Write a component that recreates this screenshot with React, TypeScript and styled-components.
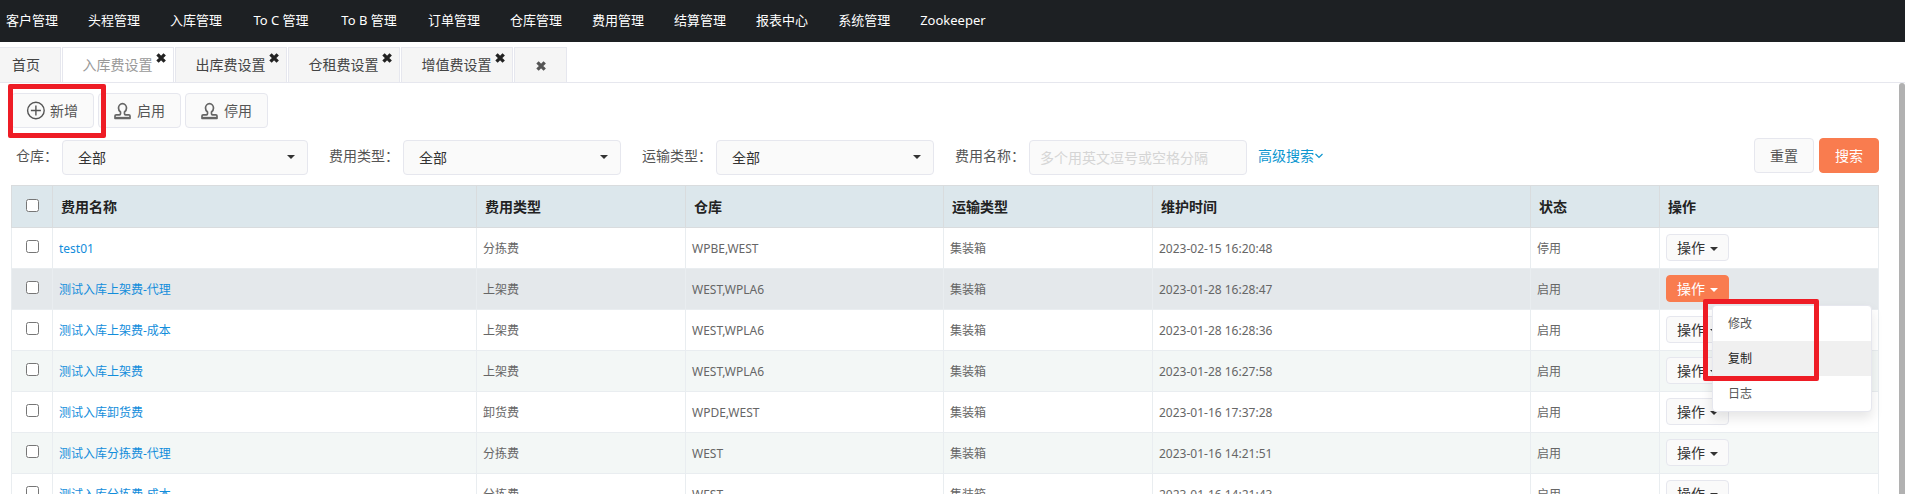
import React from 'react';
import styled, { createGlobalStyle, css } from 'styled-components';

const Global = createGlobalStyle`
  *, *::before, *::after { box-sizing: border-box; }
  html, body { margin: 0; height: 100%; overflow: hidden; }
  body {
    font-family: "Noto Sans", "Noto Sans CJK SC", sans-serif;
    font-size: 14px;
    line-height: 20px;
    color: #555;
    background: #fff;
  }
  #root { height: 100%; }
  button, input, select { font: inherit; color: inherit; margin: 0; }
  a { text-decoration: none; }
`;

const Page = styled.div`
  display: flex;
  flex-direction: column;
  height: 100%;
  overflow: hidden;
`;

const TopNav = styled.nav`
  flex: none;
  display: flex;
  gap: 30px;
  height: 42px;
  padding: 10px 6px;
  background: #1d2023;
`;

const NavLink = styled.a<{ $latin?: boolean }>`
  min-width: ${(p) => (p.$latin ? 58 : 52)}px;
  color: #fff;
  font-size: 13px;
  text-align: center;
  white-space: nowrap;
`;

const TabBar = styled.div`
  flex: none;
  display: flex;
  gap: 1px;
  margin-top: 5px;
  border-bottom: 1px solid #e6e7ee;
`;

const Tab = styled.div<{ $active?: boolean; $width: number }>`
  display: flex;
  align-items: center;
  justify-content: center;
  gap: 3px;
  width: ${(p) => p.$width}px;
  height: 35px;
  border: 1px solid #e6e7ee;
  border-bottom: 0;
  background: ${(p) => (p.$active ? '#fff' : '#f5f5f5')};
  &:first-child { border-left: 0; justify-content: flex-start; padding-left: 12px; }
`;

const TabLink = styled.a<{ $active?: boolean }>`
  color: ${(p) => (p.$active ? '#999' : '#444')};
  white-space: nowrap;
`;

const TabClose = styled.button<{ $raised?: boolean }>`
  display: flex;
  padding: 2px 0 0;
  border: 0;
  background: none;
  color: ${(p) => (p.$raised ? '#222' : '#555')};
  ${(p) => p.$raised && css`
    align-self: flex-start;
    margin: 3px -12px 0 0;
  `}
`;

const Content = styled.main`
  flex: 1;
  min-height: 0;
  overflow: hidden;
  display: flex;
`;

const Panel = styled.div`
  flex: 1;
  min-width: 0;
  padding: 10px 20px 0 11px;
`;

const ScrollTrack = styled.div`
  flex: none;
  width: 6px;
`;

const ScrollThumb = styled.div`
  height: 100%;
  background: #b1b1b1;
  border-radius: 3px 3px 0 0;
`;

const Toolbar = styled.div`
  display: flex;
  gap: 4px;
`;

const Highlighted = styled.div`
  position: relative;
`;

const Marker = styled.span<{ $top: number; $left: number; $width: number; $height: number }>`
  position: absolute;
  z-index: 5;
  top: ${(p) => p.$top}px;
  left: ${(p) => p.$left}px;
  width: ${(p) => p.$width}px;
  height: ${(p) => p.$height}px;
  border: 5px solid #ee1c25;
  border-radius: 2px;
  pointer-events: none;
`;

const boxed = css`
  height: 35px;
  border: 1px solid #e6e7ee;
  border-radius: 4px;
  background: #fafafa;
`;

const ToolButton = styled.button`
  ${boxed}
  display: flex;
  align-items: center;
  gap: 5px;
  width: 83px;
  padding: 0 0 0 14px;
  white-space: nowrap;
  svg { flex: none; }
`;

const Filters = styled.form`
  display: flex;
  align-items: flex-start;
  padding: 10px 0 10px 5px;
`;

const Field = styled.div<{ $labelWidth: number; $width: number }>`
  display: grid;
  grid-template-columns: ${(p) => p.$labelWidth}px ${(p) => p.$width}px;
  align-items: center;
  margin: 2px 21px 0 0;
`;

const FieldLabel = styled.label`
  padding-bottom: 3px;
  white-space: nowrap;
`;

const SelectWrap = styled.div`
  position: relative;
`;

const Select = styled.select`
  ${boxed}
  display: block;
  width: 100%;
  padding: 0 24px 0 15px;
  appearance: none;
  color: #333;
`;

const SelectArrow = styled.span`
  position: absolute;
  top: 15px;
  right: 13px;
  border: solid transparent;
  border-width: 4px 4px 0;
  border-top-color: #333;
  pointer-events: none;
`;

const TextInput = styled.input`
  ${boxed}
  width: 100%;
  padding: 0 10px;
  &::placeholder { color: #d5d5d5; opacity: 1; }
`;

const AdvancedLink = styled.a`
  display: flex;
  align-items: center;
  gap: 1px;
  margin: 8px 0 0 -10px;
  color: #0d96cf;
`;

const FormActions = styled.div`
  display: flex;
  gap: 5px;
  margin-left: auto;
`;

const FormButton = styled.button<{ $primary?: boolean }>`
  ${boxed}
  width: 60px;
  padding: 0;
  ${(p) => p.$primary && css`
    border-color: #f97c4f;
    background: #f97c4f;
    color: #fff;
  `}
`;

const FeeTable = styled.table`
  width: 100%;
  table-layout: fixed;
  border-collapse: collapse;
  border: 1px solid #d9dcde;
  font-size: 12px;
`;

const HeadCell = styled.th`
  height: 42px;
  padding: 0 8px;
  border: 1px solid #d9dcde;
  background: #dce7ec;
  color: #222;
  font-size: 14px;
  font-weight: bold;
  text-align: left;
`;

const Row = styled.tr<{ $tone: 'plain' | 'striped' | 'hover' }>`
  background: ${(p) => ({ plain: '#fff', striped: '#f3f7f6', hover: '#e4e8eb' })[p.$tone]};
`;

const Cell = styled.td`
  height: 41px;
  padding: 2px 6px 0;
  border: 1px solid #e9edf0;
  color: #666;
  white-space: nowrap;
`;

const ActionCell = styled(Cell)`
  padding: 0 6px 1px;
`;

const Check = styled.input`
  display: block;
  width: 13px;
  height: 13px;
`;

const CheckBox = styled.div`
  display: flex;
  justify-content: center;
  padding-bottom: 5px;
`;

const HeadCheckBox = styled(CheckBox)`
  padding-bottom: 3px;
`;

const FeeLink = styled.a`
  color: #128ddb;
`;

const MenuAnchor = styled.div`
  position: relative;
  width: 63px;
`;

const ActionButton = styled.button<{ $open?: boolean }>`
  display: flex;
  align-items: center;
  justify-content: center;
  gap: 5px;
  width: 63px;
  height: 27px;
  padding: 0;
  border: 1px solid ${(p) => (p.$open ? '#f97c4f' : '#e6e7ee')};
  border-radius: 4px;
  background: ${(p) => (p.$open ? '#f97c4f' : '#fafafa')};
  color: ${(p) => (p.$open ? '#fff' : '#333')};
  font-size: 14px;
  &::after {
    content: "";
    border: solid transparent;
    border-width: 4px 4px 0;
    border-top-color: currentColor;
    margin-top: 2px;
  }
`;

const Menu = styled.div`
  position: absolute;
  z-index: 4;
  top: 30px;
  left: 46px;
  width: 160px;
  border: 1px solid #e6e7ee;
  border-radius: 4px;
  background: #fff;
  box-shadow: 0 6px 12px rgba(0, 0, 0, 0.1);
`;

const MenuItem = styled.button<{ $hover?: boolean }>`
  display: block;
  width: 100%;
  height: 35px;
  padding: 0 15px;
  border: 0;
  background: ${(p) => (p.$hover ? '#f0f0f0' : 'transparent')};
  color: ${(p) => (p.$hover ? '#222' : '#555')};
  font-size: 12px;
  text-align: left;
`;

const CrossIcon = () => (
  <svg width="10" height="10" viewBox="0 0 10 10" aria-hidden="true">
    <path d="M1.500 1.300 8.700 8.700M8.700 1.300 1.500 8.700" stroke="currentColor" strokeWidth="3.300" fill="none" />
  </svg>
);

const PlusIcon = () => (
  <svg width="19" height="19" viewBox="0 0 19 19" fill="none" stroke="#555" strokeWidth="1.4" aria-hidden="true">
    <circle cx="9.900" cy="9.500" r="8.300" />
    <path d="M9.900 4.500v10M4.900 9.500h10" />
  </svg>
);

const StampIcon = () => (
  <svg width="19" height="18" viewBox="0 0 19 18" fill="none" stroke="#666" strokeWidth="1.700" strokeLinejoin="round" aria-hidden="true">
    <path d="M2 16.300v-2.300c0-.7.5-1.200 1.200-1.200h3.300c.7 0 1-.4 1-1V10c-1.300-.9-2-2.300-2-3.900a4 4.400 0 0 1 8 0c0 1.600-.7 3-2 3.900v1.800c0 .6.3 1 1 1h3.300c.7 0 1.200.5 1.200 1.200v2.300z" />
    <path d="M2 15.700h15" />
  </svg>
);

const ChevronIcon = () => (
  <svg width="8" height="6" viewBox="0 0 8 6" fill="none" stroke="currentColor" strokeWidth="1.2" aria-hidden="true">
    <path d="M0.500 1 4 4.500 7.500 1" />
  </svg>
);

const navItems = [
  '客户管理', '头程管理', '入库管理', 'To C 管理', 'To B 管理', '订单管理',
  '仓库管理', '费用管理', '结算管理', '报表中心', '系统管理', 'Zookeeper',
];

const openTabs = ['入库费设置', '出库费设置', '仓租费设置', '增值费设置'];

const columns = [
  { title: '费用名称', width: 424 },
  { title: '费用类型', width: 209 },
  { title: '仓库', width: 258 },
  { title: '运输类型', width: 209 },
  { title: '维护时间', width: 378 },
  { title: '状态', width: 129 },
  { title: '操作', width: 219 },
];

const fees = [
  ['test01', '分拣费', 'WPBE,WEST', '集装箱', '2023-02-15 16:20:48', '停用'],
  ['测试入库上架费-代理', '上架费', 'WEST,WPLA6', '集装箱', '2023-01-28 16:28:47', '启用'],
  ['测试入库上架费-成本', '上架费', 'WEST,WPLA6', '集装箱', '2023-01-28 16:28:36', '启用'],
  ['测试入库上架费', '上架费', 'WEST,WPLA6', '集装箱', '2023-01-28 16:27:58', '启用'],
  ['测试入库卸货费', '卸货费', 'WPDE,WEST', '集装箱', '2023-01-16 17:37:28', '启用'],
  ['测试入库分拣费-代理', '分拣费', 'WEST', '集装箱', '2023-01-16 14:21:51', '启用'],
  ['测试入库分拣费-成本', '分拣费', 'WEST', '集装箱', '2023-01-16 14:21:43', '启用'],
];

const OPEN_ROW = 1;

function SelectField({ id, label, labelWidth, width }: { id: string; label: string; labelWidth: number; width: number }) {
  return (
    <Field $labelWidth={labelWidth} $width={width}>
      <FieldLabel htmlFor={id}>{label}：</FieldLabel>
      <SelectWrap>
        <Select id={id}><option>全部</option></Select>
        <SelectArrow />
      </SelectWrap>
    </Field>
  );
}

export default function App() {
  return (
    <>
      <Global />
      <Page>
        <TopNav>
          {navItems.map((item) => (
            <NavLink key={item} href="#" $latin={/[A-Z]/.test(item)}>{item}</NavLink>
          ))}
        </TopNav>
        <TabBar>
          <Tab $width={61}><TabLink href="#">首页</TabLink></Tab>
          {openTabs.map((name, i) => (
            <Tab key={name} $width={112} $active={i === 0}>
              <TabLink href="#" $active={i === 0}>{name}</TabLink>
              <TabClose $raised type="button" aria-label={`关闭${name}`}><CrossIcon /></TabClose>
            </Tab>
          ))}
          <Tab $width={53}>
            <TabClose type="button" aria-label="关闭全部"><CrossIcon /></TabClose>
          </Tab>
        </TabBar>
        <Content>
          <Panel>
            <Toolbar>
              <Highlighted>
                <ToolButton type="button"><PlusIcon />新增</ToolButton>
                <Marker $top={-9} $left={-3} $width={98} $height={54} />
              </Highlighted>
              <ToolButton type="button"><StampIcon />启用</ToolButton>
              <ToolButton type="button"><StampIcon />停用</ToolButton>
            </Toolbar>
            <Filters onSubmit={(e) => e.preventDefault()}>
              <SelectField id="warehouse" label="仓库" labelWidth={46} width={246} />
              <SelectField id="fee-type" label="费用类型" labelWidth={74} width={218} />
              <SelectField id="transport" label="运输类型" labelWidth={74} width={218} />
              <Field $labelWidth={74} $width={218}>
                <FieldLabel htmlFor="fee-name">费用名称：</FieldLabel>
                <TextInput id="fee-name" placeholder="多个用英文逗号或空格分隔" />
              </Field>
              <AdvancedLink href="#">高级搜索<ChevronIcon /></AdvancedLink>
              <FormActions>
                <FormButton type="button">重置</FormButton>
                <FormButton type="submit" $primary>搜索</FormButton>
              </FormActions>
            </Filters>
            <FeeTable>
              <colgroup>
                <col width={41} />
                {columns.map((c) => <col key={c.title} width={c.width} />)}
              </colgroup>
              <thead>
                <tr>
                  <HeadCell><HeadCheckBox><Check type="checkbox" aria-label="全选" /></HeadCheckBox></HeadCell>
                  {columns.map((c) => <HeadCell key={c.title}>{c.title}</HeadCell>)}
                </tr>
              </thead>
              <tbody>
                {fees.map(([name, ...rest], i) => (
                  <Row key={name} $tone={i === OPEN_ROW ? 'hover' : i % 2 ? 'striped' : 'plain'}>
                    <Cell><CheckBox><Check type="checkbox" aria-label={name} /></CheckBox></Cell>
                    <Cell><FeeLink href="#">{name}</FeeLink></Cell>
                    {rest.map((text, j) => <Cell key={j}>{text}</Cell>)}
                    <ActionCell>
                      <MenuAnchor>
                        <ActionButton type="button" $open={i === OPEN_ROW}>操作</ActionButton>
                        {i === OPEN_ROW && (
                          <>
                            <Menu>
                              <MenuItem type="button">修改</MenuItem>
                              <MenuItem type="button" $hover>复制</MenuItem>
                              <MenuItem type="button">日志</MenuItem>
                            </Menu>
                            <Marker $top={24} $left={37} $width={116} $height={82} />
                          </>
                        )}
                      </MenuAnchor>
                    </ActionCell>
                  </Row>
                ))}
              </tbody>
            </FeeTable>
          </Panel>
          <ScrollTrack><ScrollThumb /></ScrollTrack>
        </Content>
      </Page>
    </>
  );
}
